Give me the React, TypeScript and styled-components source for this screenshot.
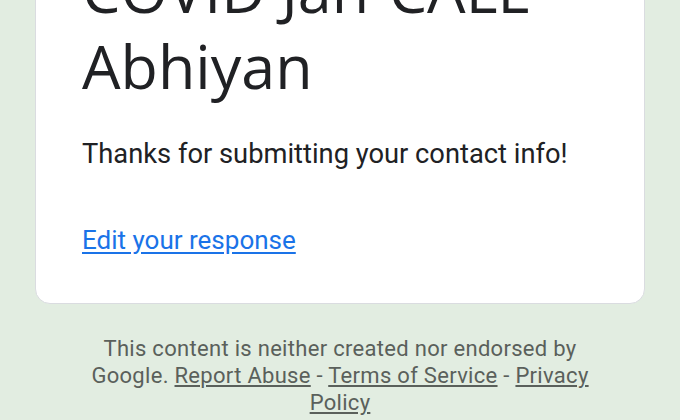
import React from "react";
import styled, { createGlobalStyle } from "styled-components";

const GlobalStyle = createGlobalStyle`
  html, body {
    margin: 0;
    padding: 0;
    background: #e2ede1;
    overflow: hidden;
  }
  body {
    font-family: Roboto, "Liberation Sans", Arial, sans-serif;
    -webkit-font-smoothing: antialiased;
  }
`;

const Page = styled.main`
  display: flex;
  flex-direction: column;
  align-items: center;
  width: 680px;
  margin-top: -95px;
`;

const Card = styled.section`
  box-sizing: border-box;
  width: 610px;
  background: #ffffff;
  border: 1px solid #dadce0;
  border-radius: 15px;
  padding: 45.6px 45.6px 45.6px 46px;
  display: flex;
  flex-direction: column;
  align-items: flex-start;
`;

const Title = styled.h1`
  margin: 0;
  font-family: "Open Sans", Roboto, sans-serif;
  font-weight: 400;
  font-size: 61px;
  line-height: 76px;
  color: #202124;
  letter-spacing: 0;
`;

const Message = styled.p`
  margin: 32.5px 0 0;
  font-family: Roboto, sans-serif;
  font-size: 27.3px;
  line-height: 36px;
  color: #202124;
`;

const EditLink = styled.a`
  margin-top: 49.7px;
  font-family: Roboto, sans-serif;
  font-size: 26px;
  line-height: 36px;
  color: #1a73e8;
  text-decoration: underline;
  text-underline-offset: 3px;
`;

const Footer = styled.footer`
  box-sizing: border-box;
  width: 520px;
  margin-top: 32px;
  text-align: center;
  font-family: Roboto, sans-serif;
  font-size: 22px;
  line-height: 26.6px;
  letter-spacing: 0.3px;
  color: #5a605b;
`;

const FooterLink = styled.a`
  color: inherit;
  text-decoration: underline;
  text-underline-offset: 2px;
`;

export default function App() {
  return (
    <>
      <GlobalStyle />
      <Page>
        <Card>
          <Title>
            COVID Jan-CALL
            <br />
            Abhiyan
          </Title>
          <Message>Thanks for submitting your contact info!</Message>
          <EditLink href="#">Edit your response</EditLink>
        </Card>
        <Footer>
          This content is neither created nor endorsed by Google.{" "}
          <FooterLink href="#">Report Abuse</FooterLink> -{" "}
          <FooterLink href="#">Terms of Service</FooterLink> -{" "}
          <FooterLink href="#">Privacy Policy</FooterLink>
        </Footer>
      </Page>
    </>
  );
}
